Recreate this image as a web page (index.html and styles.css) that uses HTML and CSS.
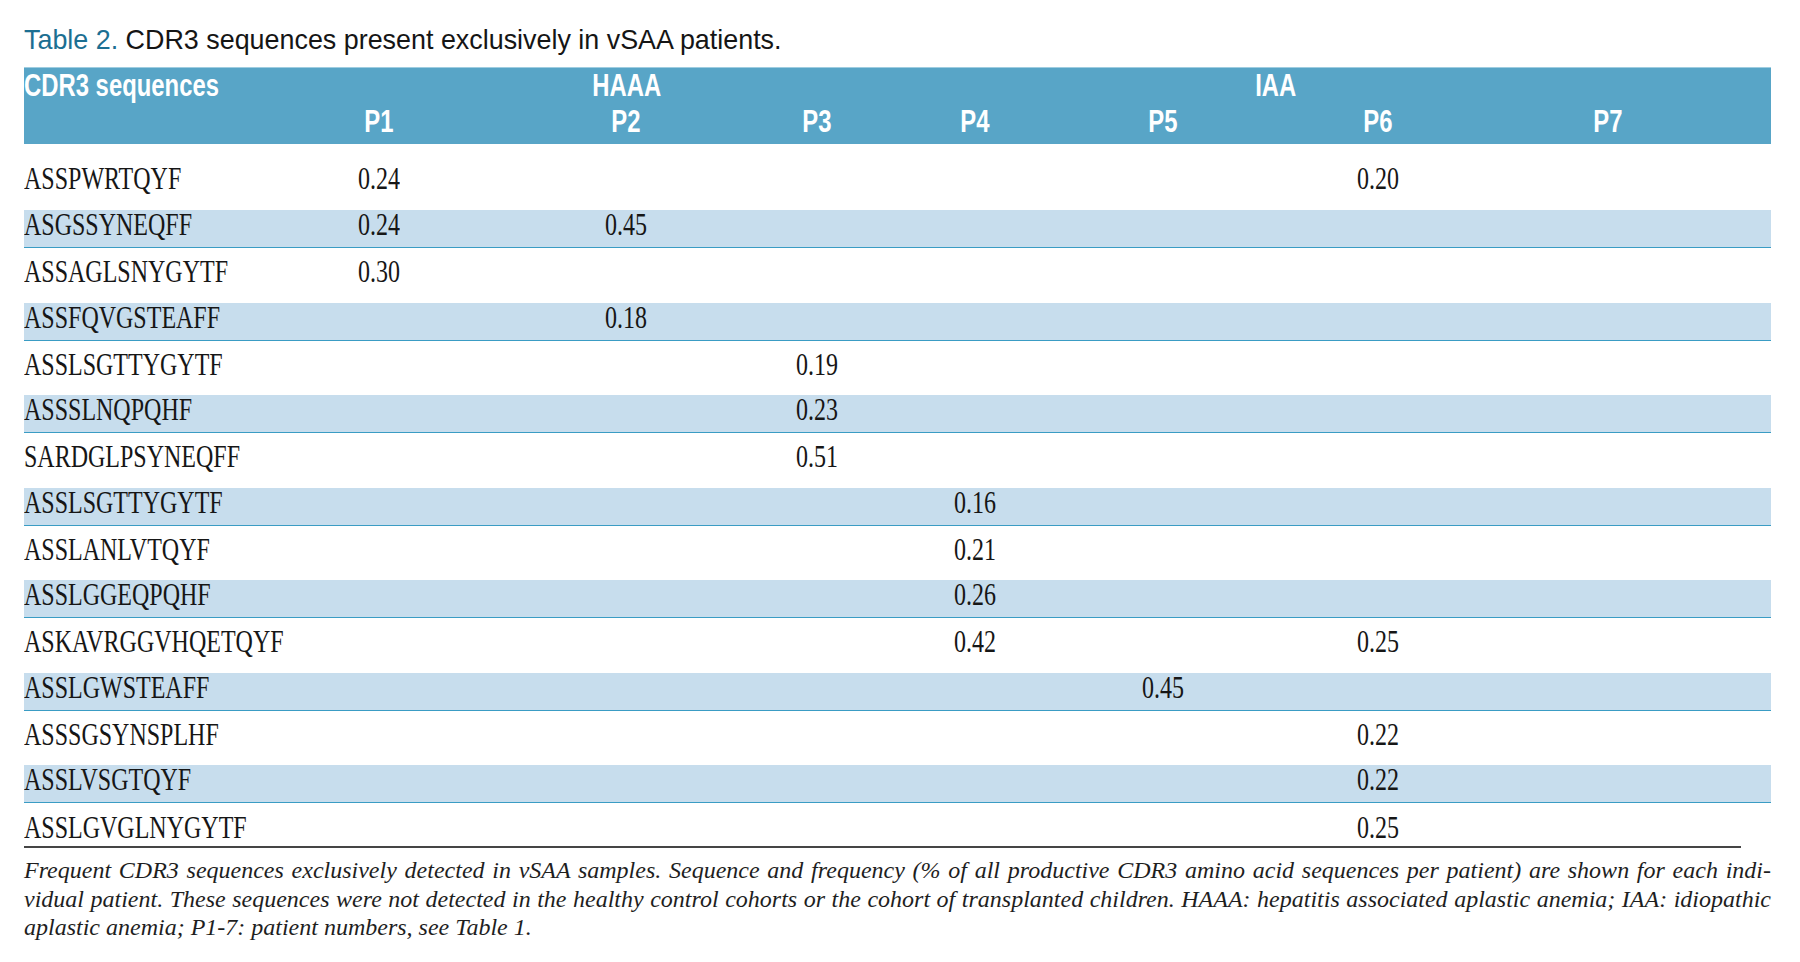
FILE: index.html
```html
<!DOCTYPE html>
<html lang="en">
<head>
<meta charset="utf-8">
<title>Table 2. CDR3 sequences present exclusively in vSAA patients.</title>
<link rel="stylesheet" href="styles.css">
</head>
<body>
<div class="page">
  <h2 class="title"><span class="title-text"><span class="label">Table 2.</span> CDR3 sequences present exclusively in vSAA patients.</span></h2>
  <table class="cdr">
    <colgroup>
      <col class="c-seq"><col class="c-p1"><col class="c-p2"><col class="c-p3"><col class="c-p4"><col class="c-p5"><col class="c-p6"><col class="c-p7">
    </colgroup>
    <thead>
      <tr class="group">
        <th class="seq-head"><span class="h">CDR3 sequences</span></th>
        <th colspan="3" class="haaa"><span class="h">HAAA</span></th>
        <th colspan="4" class="iaa"><span class="h">IAA</span></th>
      </tr>
      <tr class="pats">
        <th></th>
        <th><span class="h">P1</span></th>
        <th><span class="h">P2</span></th>
        <th><span class="h">P3</span></th>
        <th><span class="h">P4</span></th>
        <th><span class="h">P5</span></th>
        <th><span class="h">P6</span></th>
        <th class="p7"><span class="h">P7</span></th>
      </tr>
    </thead>
    <tbody>
      <tr class="first"><td><span class="t">ASSPWRTQYF</span></td><td><span class="t">0.24</span></td><td></td><td></td><td></td><td></td><td><span class="t">0.20</span></td><td class="p7"></td></tr>
      <tr class="shade"><td><span class="t">ASGSSYNEQFF</span></td><td><span class="t">0.24</span></td><td><span class="t">0.45</span></td><td></td><td></td><td></td><td></td><td class="p7"></td></tr>
      <tr class="plain"><td><span class="t">ASSAGLSNYGYTF</span></td><td><span class="t">0.30</span></td><td></td><td></td><td></td><td></td><td></td><td class="p7"></td></tr>
      <tr class="shade"><td><span class="t">ASSFQVGSTEAFF</span></td><td></td><td><span class="t">0.18</span></td><td></td><td></td><td></td><td></td><td class="p7"></td></tr>
      <tr class="plain"><td><span class="t">ASSLSGTTYGYTF</span></td><td></td><td></td><td><span class="t">0.19</span></td><td></td><td></td><td></td><td class="p7"></td></tr>
      <tr class="shade"><td><span class="t">ASSSLNQPQHF</span></td><td></td><td></td><td><span class="t">0.23</span></td><td></td><td></td><td></td><td class="p7"></td></tr>
      <tr class="plain"><td><span class="t">SARDGLPSYNEQFF</span></td><td></td><td></td><td><span class="t">0.51</span></td><td></td><td></td><td></td><td class="p7"></td></tr>
      <tr class="shade"><td><span class="t">ASSLSGTTYGYTF</span></td><td></td><td></td><td></td><td><span class="t">0.16</span></td><td></td><td></td><td class="p7"></td></tr>
      <tr class="plain"><td><span class="t">ASSLANLVTQYF</span></td><td></td><td></td><td></td><td><span class="t">0.21</span></td><td></td><td></td><td class="p7"></td></tr>
      <tr class="shade"><td><span class="t">ASSLGGEQPQHF</span></td><td></td><td></td><td></td><td><span class="t">0.26</span></td><td></td><td></td><td class="p7"></td></tr>
      <tr class="plain"><td><span class="t">ASKAVRGGVHQETQYF</span></td><td></td><td></td><td></td><td><span class="t">0.42</span></td><td></td><td><span class="t">0.25</span></td><td class="p7"></td></tr>
      <tr class="shade"><td><span class="t">ASSLGWSTEAFF</span></td><td></td><td></td><td></td><td></td><td><span class="t">0.45</span></td><td></td><td class="p7"></td></tr>
      <tr class="plain"><td><span class="t">ASSSGSYNSPLHF</span></td><td></td><td></td><td></td><td></td><td></td><td><span class="t">0.22</span></td><td class="p7"></td></tr>
      <tr class="shade"><td><span class="t">ASSLVSGTQYF</span></td><td></td><td></td><td></td><td></td><td></td><td><span class="t">0.22</span></td><td class="p7"></td></tr>
      <tr class="last"><td><span class="t">ASSLGVGLNYGYTF</span></td><td></td><td></td><td></td><td></td><td></td><td><span class="t">0.25</span></td><td class="p7"></td></tr>
    </tbody>
  </table>
  <div class="rule"></div>
  <p class="caption">
    <span class="line just">Frequent CDR3 sequences exclusively detected in vSAA samples. Sequence and frequency (% of all productive CDR3 amino acid sequences per patient) are shown for each indi-</span>
    <span class="line just">vidual patient. These sequences were not detected in the healthy control cohorts or the cohort of transplanted children. HAAA: hepatitis associated aplastic anemia; IAA: idiopathic</span>
    <span class="line">aplastic anemia; P1-7: patient numbers, see Table 1.</span>
  </p>
</div>
</body>
</html>
```

FILE: styles.css
```css
html, body {
  margin: 0;
  padding: 0;
  background: #ffffff;
}

.page {
  padding: 0 29px 0 24px;
  overflow: hidden;
  color: #161616;
}

.title {
  margin: 23px 0 10px;
  font-family: "Liberation Sans", Arial, sans-serif;
  font-weight: normal;
  font-size: 28px;
  line-height: 34px;
  color: #151515;
  white-space: nowrap;
}

.title-text {
  display: inline-block;
  transform: scaleX(0.96);
  transform-origin: 0 50%;
}

.title .label {
  color: #1c6f92;
}

.cdr {
  width: 1747px;
  table-layout: fixed;
  border-collapse: collapse;
  border-spacing: 0;
}

.c-seq { width: 266px; }
.c-p1 { width: 178px; }
.c-p2 { width: 316px; }
.c-p3 { width: 66px; }
.c-p4 { width: 250px; }
.c-p5 { width: 126px; }
.c-p6 { width: 304px; }
.c-p7 { width: 241px; }

.cdr thead {
  background: #58a5c7;
}

.cdr th {
  padding: 0;
  font-family: "Liberation Sans", Arial, sans-serif;
  font-weight: bold;
  font-size: 31px;
  line-height: 34px;
  color: #ffffff;
  text-align: center;
  vertical-align: middle;
  white-space: nowrap;
}

.cdr .group th {
  height: 36px;
  border-top: 1px solid #9fcde0;
}

.cdr .pats th {
  height: 36px;
  padding-bottom: 4px;
}

.cdr th.seq-head {
  text-align: left;
}

.cdr th.haaa {
  padding-left: 114px;
}

.cdr th.iaa {
  padding-right: 69px;
}

.cdr .h {
  display: inline-block;
  transform: scaleX(0.77);
}

.cdr th.seq-head .h {
  transform-origin: 0 50%;
}

.cdr td {
  padding: 0;
  font-family: "Liberation Serif", "Times New Roman", serif;
  font-size: 32px;
  line-height: 28px;
  color: #161616;
  text-align: center;
  vertical-align: middle;
  white-space: nowrap;
}

.cdr td:first-child {
  text-align: left;
}

.cdr .p7 {
  padding-right: 85px;
}

.cdr .t {
  display: inline-block;
  transform: scaleX(0.75);
}

.cdr td:first-child .t {
  transform-origin: 0 50%;
}

.cdr tr.first td {
  height: 64px;
  padding-top: 2px;
}

.cdr tr.shade td {
  height: 28px;
  padding-bottom: 9px;
  background: #c7dded;
  border-bottom: 1px solid #3a9cc4;
}

.cdr tr.plain td {
  height: 46.5px;
  padding-bottom: 8px;
}

.cdr tr.last td {
  height: 39px;
  padding-top: 4px;
}

.rule {
  width: 1717px;
  height: 2px;
  background: #454545;
}

.caption {
  margin: 8px 0 0;
  width: 1747px;
  font-family: "Liberation Serif", "Times New Roman", serif;
  font-style: italic;
  font-size: 24px;
  line-height: 28.5px;
  color: #1e1e1e;
}

.caption .line {
  display: block;
  white-space: nowrap;
}

.caption .line.just {
  text-align: justify;
  text-align-last: justify;
  white-space: normal;
}
```
